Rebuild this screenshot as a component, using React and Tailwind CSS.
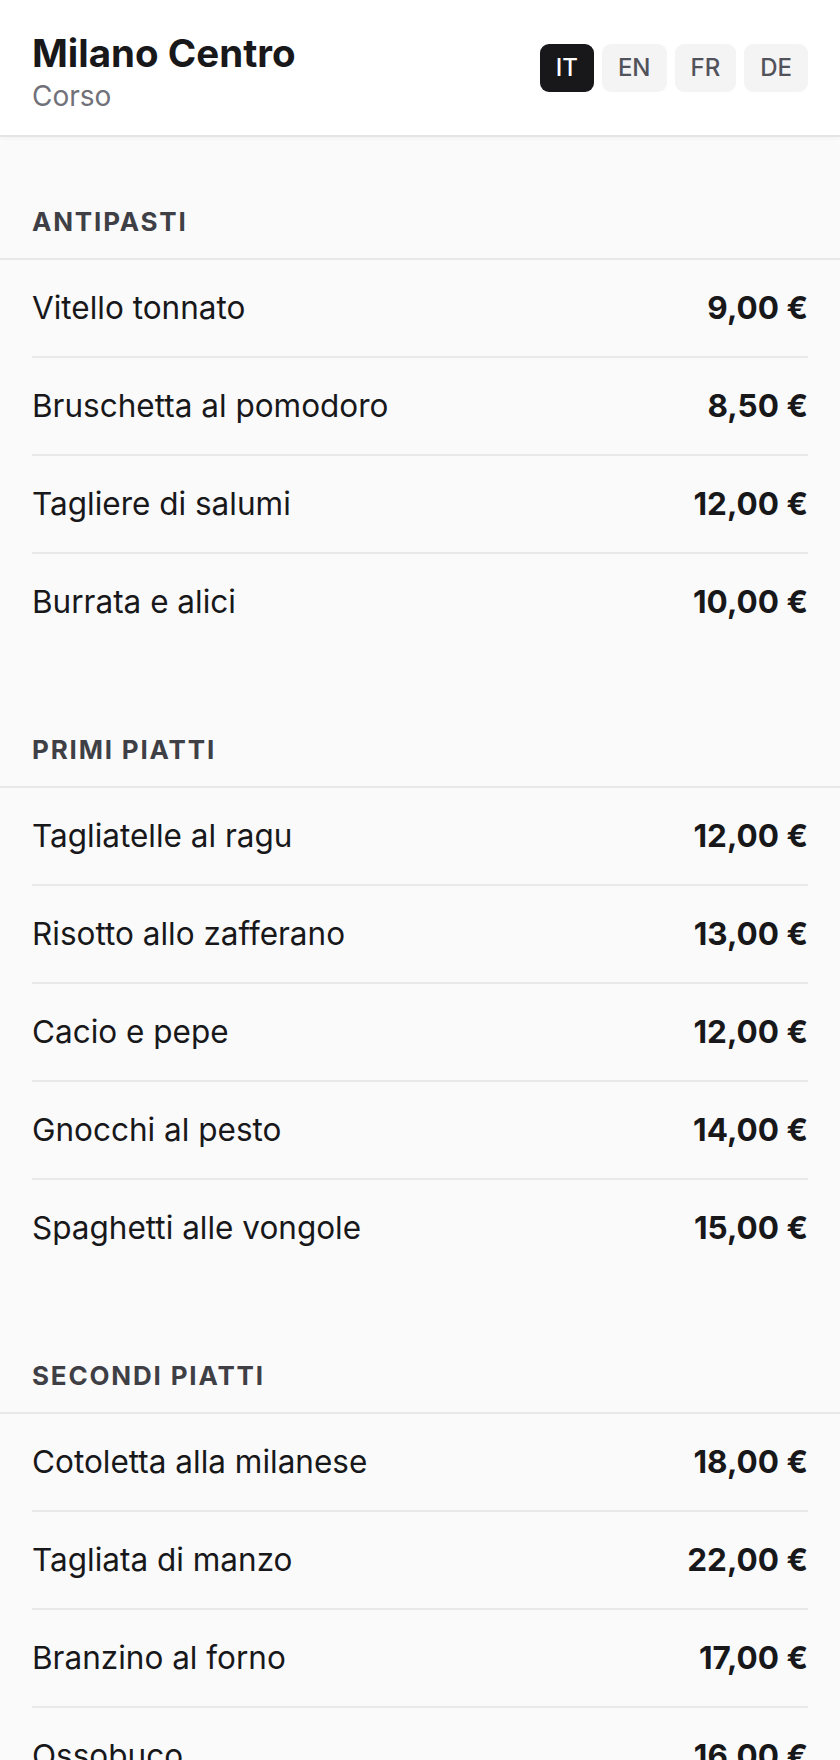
import React, { useState } from 'react'

const menu = [
    {
        title: 'ANTIPASTI',
        items: [
            ['Vitello tonnato', '9,00 €'],
            ['Bruschetta al pomodoro', '8,50 €'],
            ['Tagliere di salumi', '12,00 €'],
            ['Burrata e alici', '10,00 €'],
        ],
    },
    {
        title: 'PRIMI PIATTI',
        items: [
            ['Tagliatelle al ragu', '12,00 €'],
            ['Risotto allo zafferano', '13,00 €'],
            ['Cacio e pepe', '12,00 €'],
            ['Gnocchi al pesto', '14,00 €'],
            ['Spaghetti alle vongole', '15,00 €'],
        ],
    },
    {
        title: 'SECONDI PIATTI',
        items: [
            ['Cotoletta alla milanese', '18,00 €'],
            ['Tagliata di manzo', '22,00 €'],
            ['Branzino al forno', '17,00 €'],
            ['Ossobuco', '16,00 €'],
        ],
    },
]

const langs = ['IT', 'EN', 'FR', 'DE']

export default function App() {
    const [lang, setLang] = useState('IT')

    return (
        <div className="min-h-screen bg-[#fafafa] text-[#18181b]" style={{ fontFamily: 'Inter, "Noto Sans", sans-serif' }}>
            {/* header */}
            <header className="flex items-start justify-between bg-white px-[32px] pt-[30px] pb-[21px] border-b-2 border-[#e5e5e5] shadow-[0_2px_4px_rgba(0,0,0,0.03)]">
                <div>
                    <h1 className="text-[38.5px] leading-[46px] font-bold text-[#18181b]">Milano Centro</h1>
                    <p className="mt-[2px] text-[28px] leading-[36px] text-[#71717a]">Corso</p>
                </div>
                <div className="mt-[14px] flex gap-[8px]">
                    {langs.map(l => (
                        <button
                            key={l}
                            type="button"
                            onClick={() => setLang(l)}
                            className={
                                l === lang
                                    ? "h-[48px] rounded-[9px] px-[16px] text-[24px] font-medium bg-[#18181b] text-white"
                                    : "h-[48px] rounded-[9px] px-[16px] text-[24px] font-medium bg-[#f4f4f5] text-[#52525b]"
                            }
                        >{l}</button>
                    ))}
                </div>
            </header>

            <main>
                {menu.map(section => (
                    <section key={section.title}>
                        <h2 className="px-[32px] pt-[69px] pb-[20px] text-[26px] leading-[32px] font-bold tracking-[0.07em] text-[#3f3f46] border-b-2 border-[#e7e7e7]">
                            {section.title}
                        </h2>
                        <ul className="px-[32px] pb-[15px]">
                            {section.items.map(([name, price]) => (
                                <li key={name} className="flex items-center justify-between py-[24px] border-b-2 border-[#e9e9e9] last:border-b-0">
                                    <span className="text-[31.5px] leading-[48px]">{name}</span>
                                    <span className="text-[31.5px] leading-[48px] font-bold">{price}</span>
                                </li>
                            ))}
                        </ul>
                    </section>
                ))}
            </main>
        </div>
    )
}
